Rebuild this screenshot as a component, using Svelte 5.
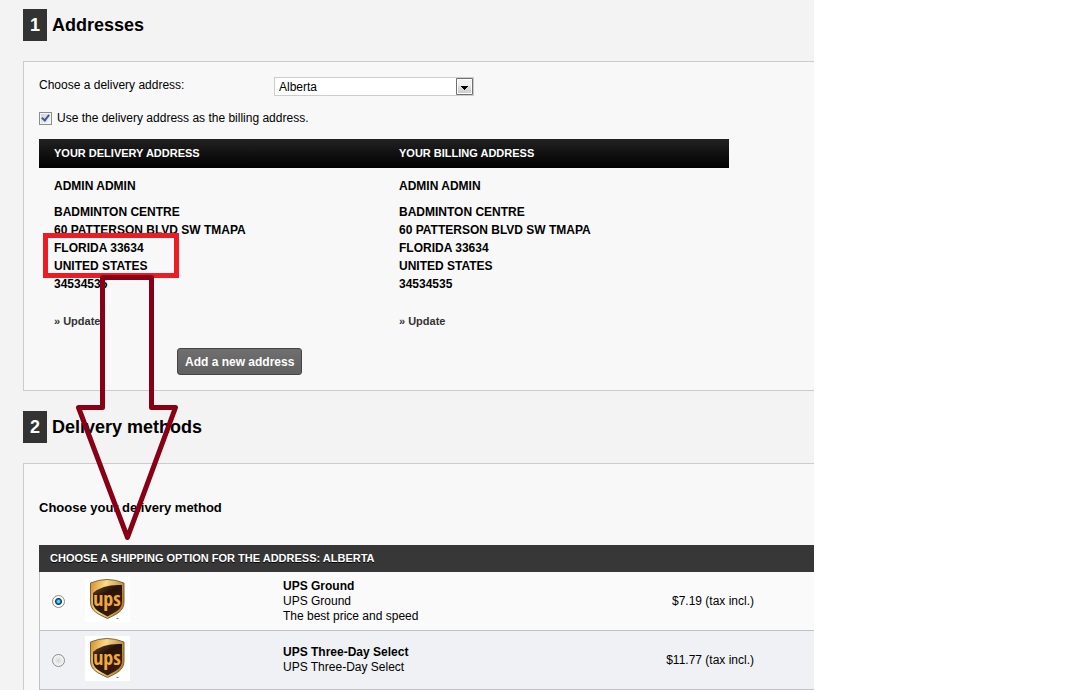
<script>
  const lines = ['BADMINTON CENTRE', '60 PATTERSON BLVD SW TMAPA', 'FLORIDA 33634', 'UNITED STATES', '34534535'];

  const addresses = [
    { title: 'YOUR DELIVERY ADDRESS', name: 'ADMIN ADMIN', lines },
    { title: 'YOUR BILLING ADDRESS', name: 'ADMIN ADMIN', lines }
  ];

  const carriers = [
    { id: 'ground', name: 'UPS Ground', details: ['UPS Ground', 'The best price and speed'], price: '$7.19' },
    { id: 'three-day', name: 'UPS Three-Day Select', details: ['UPS Three-Day Select'], price: '$11.77' }
  ];

  let country = $state('Alberta');
  let sameAddress = $state(true);
  let carrier = $state('ground');
</script>

<div class="page">
  <main>
    <h1><span class="step">1</span>Addresses</h1>
    <section class="panel addresses">
      <div class="choose">
        <label for="delivery">Choose a delivery address:</label>
        <div class="select">
          <select id="delivery" bind:value={country}>
            <option>Alberta</option>
          </select>
          <svg class="arrow" viewBox="0 0 17 18" aria-hidden="true">
            <defs>
              <linearGradient id="knob" x2="0" y2="1">
                <stop offset="0.4" stop-color="#f2f2f2" />
                <stop offset="0.5" stop-color="#dedede" />
                <stop offset="1" stop-color="#cfcfcf" />
              </linearGradient>
            </defs>
            <path d="M.5.5h16v16H.5z" fill="#fff" stroke="#707070" />
            <path d="M2 2h13v13H2z" fill="url(#knob)" />
            <path d="M5 8h7v1h-1v1h-1v1H9v1H8v-1H7v-1H6V9H5z" fill="#000" />
          </svg>
        </div>
      </div>
      <label class="same">
        <input type="checkbox" bind:checked={sameAddress} />
        Use the delivery address as the billing address.
      </label>

      <div class="cards">
        {#each addresses as address}
          <article>
            <h2>{address.title}</h2>
            <p class="name">{address.name}</p>
            <ul>
              {#each address.lines as line}
                <li>{line}</li>
              {/each}
            </ul>
            <a href="#update">» Update</a>
          </article>
        {/each}
      </div>
      <button type="button">Add a new address</button>

      <div class="marker" aria-hidden="true"></div>
      <svg class="pointer" viewBox="0 0 104 268" aria-hidden="true">
        <path d="M28.5 3.5H77.5V133.5H101.5L53.5 263.5L4.5 133.5H28.5Z" />
      </svg>
    </section>

    <h1><span class="step">2</span>Delivery methods</h1>
    <section class="panel methods">
      <h3>Choose your delivery method</h3>
      <h4>CHOOSE A SHIPPING OPTION FOR THE ADDRESS: ALBERTA</h4>
      <table>
        <tbody>
          {#each carriers as item}
            <tr>
              <td class="radio">
                <input type="radio" name="carrier" id={item.id} value={item.id} bind:group={carrier} />
              </td>
              <td class="logo">
                <svg viewBox="0 0 45 45" role="img" aria-label="UPS">
                  <defs>
                    <linearGradient id="gold-{item.id}" x2="1" y2="0.3">
                      <stop offset="0" stop-color="#d08c28" />
                      <stop offset="0.45" stop-color="#fbdc86" />
                      <stop offset="1" stop-color="#b88434" />
                    </linearGradient>
                    <linearGradient id="brown-{item.id}" x2="0.6" y2="1">
                      <stop offset="0" stop-color="#6a4a30" />
                      <stop offset="0.4" stop-color="#28130a" />
                      <stop offset="1" stop-color="#3a1c0c" />
                    </linearGradient>
                  </defs>
                  <path d="M0 0h45v45H0z" fill="#fff" />
                  <path d="M5.500 6Q22-1 39 6V25C39 34 32 37 22.500 41.500C13 37 5.500 34 5.500 25Z" fill="url(#gold-{item.id})" stroke="#7b6240" />
                  <path d="M8 16Q18 7 37 8V25C37 32 31 35 22.500 39.500C14 35 8 32 8 25Z" fill="url(#brown-{item.id})" />
                  <text x="22" y="29" text-anchor="middle">ups</text>
                  <path d="M31 41h3l-1 1h-1z" fill="#777" />
                </svg>
              </td>
              <td class="info">
                <label for={item.id}>
                  <strong>{item.name}</strong>
                  {#each item.details as detail}
                    <span>{detail}</span>
                  {/each}
                </label>
              </td>
              <td class="price">{item.price} (tax incl.)</td>
            </tr>
          {/each}
        </tbody>
      </table>
    </section>
  </main>
</div>

<style>
  :global(body) {
    margin: 0;
    background: #fff;
  }

  .page {
    display: grid;
    grid-template-columns: 814fr 264fr;
    min-height: 100vh;
    font: 12px/18px "Liberation Sans", Arial, sans-serif;
    color: #000;
  }

  main {
    box-sizing: border-box;
    padding: 9px 0 0 23px;
    background: #f3f3f3;
  }

  h1, h2, h3, h4, p, ul {
    margin: 0;
    padding: 0;
  }

  h1 {
    display: flex;
    gap: 5px;
    margin-bottom: 20px;
    font-size: 18px;
    line-height: 32px;
  }

  .step {
    width: 24px;
    background: #333;
    color: #fff;
    text-align: center;
  }

  .panel {
    position: relative;
    padding-left: 15px;
    border: 1px solid #ccc;
    border-right: 0;
    background: #f8f8f8;
  }

  .addresses {
    margin-bottom: 20px;
    padding-top: 15px;
    padding-bottom: 15px;
  }

  .choose {
    display: flex;
  }

  .choose label {
    width: 235px;
    line-height: 16px;
  }

  .select {
    position: relative;
    width: 200px;
  }

  select {
    display: block;
    box-sizing: border-box;
    width: 100%;
    height: 19px;
    padding: 0 20px 0 4px;
    border: 1px solid #ccc;
    border-radius: 0;
    background: #fff;
    color: #000;
    font: inherit;
    appearance: none;
  }

  .arrow {
    position: absolute;
    top: 1px;
    right: 1px;
    width: 17px;
    height: 18px;
    pointer-events: none;
  }

  .same {
    display: flex;
    align-items: center;
    gap: 5px;
    margin: 13px 0 12px;
  }

  input {
    appearance: none;
    box-sizing: border-box;
    width: 13px;
    height: 13px;
    margin: 0;
    border: 1px solid #8a8c8e;
  }

  input[type="checkbox"] {
    display: grid;
    place-items: center;
    background: linear-gradient(135deg, #ccd0d6, #fafafa);
    box-shadow: inset 0 0 0 1px #f4f4f4;
  }

  input[type="checkbox"]:checked::before {
    content: "";
    width: 3px;
    height: 6px;
    margin-bottom: 2px;
    border: solid #405a99;
    border-width: 0 2px 2px 0;
    transform: rotate(38deg);
  }

  .cards {
    display: grid;
    grid-template-columns: 1fr 1fr;
    max-width: 690px;
    background: linear-gradient(#222, #000) top / 100% 29px no-repeat;
  }

  article {
    padding-left: 15px;
    font-weight: bold;
  }

  h2 {
    color: #fff;
    font-size: 11px;
    line-height: 29px;
  }

  .name {
    margin: 9px 0 8px;
  }

  ul {
    list-style: none;
  }

  article a {
    display: block;
    margin-top: 19px;
    color: #333;
    font-size: 11px;
    text-decoration: none;
  }

  button {
    display: block;
    height: 27px;
    margin: 18px 0 0 138px;
    padding: 0 7px;
    border: 1px solid #444;
    border-radius: 3px;
    background: linear-gradient(#6f6f6f, #606060);
    color: #fff;
    font: bold 12px "Liberation Sans", Arial, sans-serif;
  }

  /* highlight drawn over the address lines */
  .marker {
    position: absolute;
    z-index: 1;
    top: 171px;
    left: 19px;
    box-sizing: border-box;
    width: 136px;
    height: 45px;
    border: 5px solid #ed1c24;
  }

  .pointer {
    position: absolute;
    z-index: 2;
    top: 212px;
    left: 50px;
    width: 104px;
    height: 268px;
    fill: none;
    stroke: #880015;
    stroke-width: 5px;
    stroke-linejoin: round;
    pointer-events: none;
  }

  .methods {
    padding-top: 35px;
    border-bottom: 0;
  }

  h3 {
    margin-bottom: 28px;
    font-size: 13px;
    line-height: 18px;
  }

  h4 {
    padding-left: 11px;
    background: #373737;
    color: #fff;
    font-size: 11px;
    font-weight: bold;
    line-height: 27px;
    text-shadow: 0 1px #000;
  }

  table {
    width: 100%;
    border-collapse: separate;
    border-spacing: 0;
    border-left: 1px solid #bdc2c9;
    background: #fafafa;
    line-height: 15px;
  }

  tr:nth-child(even) {
    background: #eff1f4;
  }

  td {
    box-sizing: border-box;
    height: 59px;
    padding: 0;
    border-bottom: 1px solid #bdc2c9;
  }

  .radio {
    width: 45px;
    padding-left: 12px;
  }

  input[type="radio"] {
    display: block;
    border-radius: 50%;
    background: radial-gradient(circle, #d4d4d4, #eee 50%, #fff);
  }

  input[type="radio"]:checked {
    background: radial-gradient(circle, #6ad0f5 0 1px, #1678b0 2px, #143a5c 3px, #fff 4px);
  }

  .logo {
    width: 198px;
  }

  .logo svg {
    display: block;
    width: 45px;
    height: 45px;
    margin-bottom: 3px;
  }

  .logo text {
    fill: #f0aa3c;
    font: bold 20px "Liberation Sans Narrow", "Open Sans Condensed", "Liberation Sans", sans-serif;
  }

  .info strong,
  .info span {
    display: block;
  }

  .price {
    padding-right: 60px;
    text-align: right;
  }
</style>
